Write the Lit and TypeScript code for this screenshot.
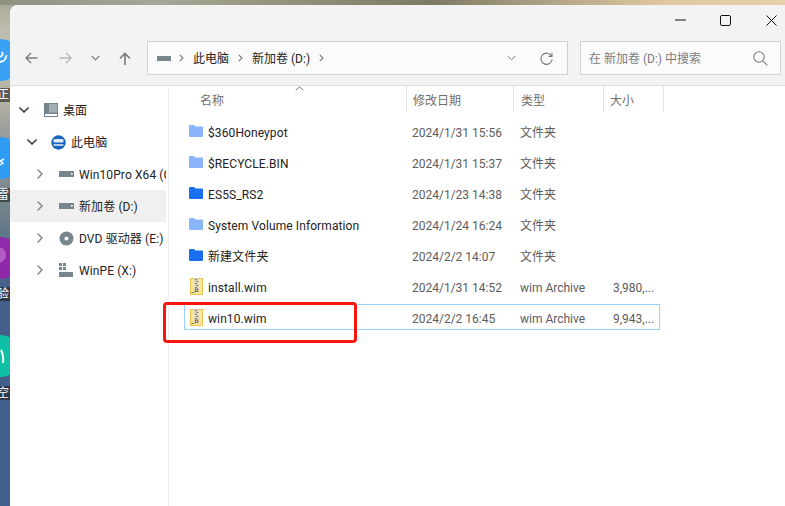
import { LitElement, html, css, svg } from "lit";
import { customElement } from "lit/decorators.js";

const folder = (c: string) => svg`<svg class="ficon" width="15" height="12" viewBox="0 0 15 12"><path d="M0 1Q0 0 1 0H5L6.6 1.6H13Q14 1.6 14 2.6V11Q14 12 13 12H1Q0 12 0 11Z" fill="${c}"/></svg>`;
const archive = svg`<svg class="ficon" width="15" height="17" viewBox="0 0 15 17"><rect x="1.5" y=".5" width="12" height="16" fill="#fbe59a" stroke="#ecc552" stroke-width="1"/><rect x="5.5" y="0" width="4" height="11" fill="#cfcfca"/><path d="M6 1.5h1.6M7.6 3.5h1.6M6 5.5h1.6M7.6 7.5h1.6M6 9.5h1.6" stroke="#77786f" stroke-width="1"/><rect x="5.8" y="10.5" width="3.6" height="3.6" rx=".6" fill="#77776a"/><rect x="7" y="11.6" width="1.4" height="1.2" fill="#deded2"/><path d="M2.4 14.5h3.2" stroke="#8f8a5c"/></svg>`;
const drive = svg`<svg width="15" height="6" viewBox="0 0 15 6"><rect width="15" height="6" rx=".6" fill="#77868c"/><rect x="12" y="2" width="1.6" height="1.6" fill="#fff"/></svg>`;
const chevR = svg`<svg width="8" height="12" viewBox="0 0 8 12"><path d="M1.6 1.4L6 6L1.6 10.6" fill="none" stroke="#8a8a8a" stroke-width="1.5"/></svg>`;
const chevD = svg`<svg width="12" height="8" viewBox="0 0 12 8"><path d="M1.4 1.5L6 6L10.6 1.5" fill="none" stroke="#333" stroke-width="1.5"/></svg>`;
const crumbChev = svg`<svg width="5" height="8" viewBox="0 0 5 8"><path d="M.8 .8L4 4L.8 7.2" fill="none" stroke="#777" stroke-width="1.1"/></svg>`;

const rows = [
  ["l", "$360Honeypot", "2024/1/31 15:56", "文件夹", ""],
  ["l", "$RECYCLE.BIN", "2024/1/31 15:37", "文件夹", ""],
  ["d", "ES5S_RS2", "2024/1/23 14:38", "文件夹", ""],
  ["l", "System Volume Information", "2024/1/24 16:24", "文件夹", ""],
  ["d", "新建文件夹", "2024/2/2 14:07", "文件夹", ""],
  ["a", "install.wim", "2024/1/31 14:52", "wim Archive", "3,980,..."],
  ["a", "win10.wim", "2024/2/2 16:45", "wim Archive", "9,943,..."],
];

@customElement("app-root")
export class AppRoot extends LitElement {
  static styles = css`
    :host {
      display: block; width: 785px; height: 506px; position: relative; overflow: hidden;
      font-family: Roboto, "Noto Sans CJK SC", sans-serif; font-size: 12px; line-height: 16px; color: #222;
      background: linear-gradient(180deg, #a9a897 0, #bdbcae 30px, #b5b3a5 100px, #9d9f9e 130px, #6d8089 215px, #5c7389 240px, #44608a 290px, #41608c 506px);
    }
    .top { position: absolute; left: 0; right: 0; top: 0; height: 5px;
      background: linear-gradient(90deg, #8e9180 0, #a8a796 20%, #7d7a62 55%, #a99e82 68%, #e0c9a2 85%, #e6cfa9 100%); }
    .blob { position: absolute; left: -21px; width: 42px; height: 42px; border-radius: 50%; }
    .b1 { top: 39px; background: #3ba1f4; }
    .b2 { top: 137px; background: #2f9bf3; }
    .b3 { top: 237px; background: #8e29a8; }
    .b4 { top: 335px; background: #10bfa4; }
    .dl { position: absolute; left: 0; width: 10px; height: 14px; overflow: hidden; color: #fff; font-size: 12px; line-height: 14px;
      background: rgba(30,30,30,.6); white-space: nowrap; text-indent: -3px; }
    .l1 { top: 88px; } .l2 { top: 188px; } .l3 { top: 287px; } .l4 { top: 386px; }
    .mark { position: absolute; left: 0; top: 0; }
    .win { position: absolute; left: 10px; top: 5px; right: 0; bottom: 0; background: #fff; border-top-left-radius: 8px;
      display: flex; flex-direction: column; overflow: hidden; }
    .bar { background: #f3f3f3; border-bottom: 1px solid #dedede; height: 80px; display: flex; flex-direction: column; flex: none; }
    .caption { height: 36px; display: flex; justify-content: flex-end; align-items: flex-start; padding-top: 8px; box-sizing: border-box; flex: none; }
    .cbtn { height: 14px; display: flex; justify-content: center; align-items: center; }
    .cmin { width: 44px; }
    .cmax { width: 46px; margin-right: 10px; }
    .cclose { width: 27px; }
    .nav { display: flex; height: 34px; align-items: center; flex: none; }
    .navi { display: flex; align-items: center; justify-content: center; flex: none; }
    .n1 { width: 42px; } .n2 { width: 26px; } .n3 { width: 34px; } .n4 { width: 26px; }
    .addr { width: 421px; margin-left: 9px; height: 34px; box-sizing: border-box; background: #fbfbfb; border: 1px solid #d2d2d2; display: flex; align-items: center; flex: none; color: #222; }
    .search { width: 201px; height: 34px; margin-left: 12px; box-sizing: border-box; background: #fbfbfb; border: 1px solid #d2d2d2; display: flex; align-items: center; justify-content: space-between; padding: 0 12px 0 8px; color: #7c7c7c; flex: none; }
    .t { padding-top: 2px; }
    .crumb { display: flex; align-items: center; }
    .c1 { margin-left: 9px; }
    .c2 { margin: 0 9px 0 8px; }
    .c3 { margin: 0 9px; }
    .c4 { margin-left: 9px; }
    .c5 { flex: 1; }
    .c6 { margin: 0 14px 0 24px; }
    .main { display: flex; flex: 1; min-height: 0; }
    .side { width: 158px; border-right: 1px solid #efefef; padding-top: 8px; flex: none; }
    .item { height: 32px; width: 156px; display: flex; align-items: center; white-space: nowrap; overflow: hidden; box-sizing: border-box; letter-spacing: .1px; }
    .item.sel { background: #f0f0f0; }
    .lv0 { padding-left: 7px; } .lv1 { padding-left: 15px; } .lv2 { padding-left: 23px; }
    .chev { width: 14px; display: flex; justify-content: center; flex: none; margin-right: 12px; }
    .ic { width: 15px; display: flex; justify-content: center; align-items: center; margin-right: 5px; flex: none; }
    .list { flex: 1; position: relative; padding-left: 15px; }
    .hd { height: 26px; display: flex; color: #6f6f6f; position: relative; }
    .hc { display: flex; align-items: center; border-right: 1px solid #e3e3e3; box-sizing: border-box; flex: none; padding-top: 4px; }
    .h1 { width: 223px; padding-left: 16px; }
    .h2 { width: 107px; padding-left: 6px; }
    .h3 { width: 90px; padding-left: 7px; }
    .h4 { width: 60px; padding-left: 6px; }
    .sort { position: absolute; left: 111px; top: 0; }
    .rows { display: flex; flex-direction: column; gap: 5px; padding-top: 6px; }
    .row { height: 26px; width: 476px; display: flex; align-items: center; box-sizing: border-box; border: 1px solid transparent; white-space: nowrap; }
    .row.sel { border-color: #99d1ff; }
    .name { width: 227px; display: flex; align-items: center; padding-left: 4px; box-sizing: border-box; color: #222; flex: none; letter-spacing: .1px; }
    .nm, .date, .type, .size { padding-top: 4px; }
    .ficon { margin-right: 4px; flex: none; }
    .date { width: 108px; color: #5c5c5c; flex: none; }
    .type { width: 93px; color: #5c5c5c; flex: none; }
    .size { color: #5c5c5c; }
    .red { position: absolute; left: -6px; top: 216px; width: 194px; height: 41px; box-sizing: border-box; border: 3px solid #f5170f; border-radius: 4px; pointer-events: none; }
  `;

  private side(lv: number, chev: unknown, icon: unknown, text: string, sel = false) {
    return html`<div class="item lv${lv} ${sel ? "sel" : ""}"><span class="chev">${chev}</span><span class="ic">${icon}</span><span class="t">${text}</span></div>`;
  }

  render() {
    return html`
      <div class="top"></div>
      <div class="blob b1"></div><div class="blob b2"></div><div class="blob b3"></div><div class="blob b4"></div>
      <svg class="mark" width="10" height="506" viewBox="0 0 10 506">
        <path d="M2 52Q4 55 0 57M6.5 55Q6 61 0 62" fill="none" stroke="#fff" stroke-width="1.8"/>
        <path d="M4 159L0 161L3 163L0 165" fill="none" stroke="#fff" stroke-width="1.4"/>
        <circle cx="-2" cy="255" r="8" fill="#b25bc4"/>
        <path d="M1 350Q4 356 3 363" fill="none" stroke="#fff" stroke-width="2"/>
      </svg>
      <div class="dl l1">正</div><div class="dl l2">雷</div><div class="dl l3">验</div><div class="dl l4">空</div>
      <div class="win">
        <div class="bar">
          <div class="caption">
            <span class="cbtn cmin"><svg width="11" height="2" viewBox="0 0 11 2"><path d="M0 1H11" stroke="#111" stroke-width="1"/></svg></span>
            <span class="cbtn cmax"><svg width="11" height="11" viewBox="0 0 11 11"><rect x=".5" y=".5" width="10" height="10" rx="1.4" fill="none" stroke="#111"/></svg></span>
            <span class="cbtn cclose"><svg width="11" height="11" viewBox="0 0 11 11"><path d="M.5 .5L10.5 10.5M10.5 .5L.5 10.5" stroke="#111"/></svg></span>
          </div>
          <div class="nav">
            <span class="navi n1"><svg width="13" height="12" viewBox="0 0 13 12"><path d="M12.5 6H1M6 1L1 6L6 11" fill="none" stroke="#7d7d7d" stroke-width="1.4"/></svg></span>
            <span class="navi n2"><svg width="13" height="12" viewBox="0 0 13 12"><path d="M.5 6H12M7 1L12 6L7 11" fill="none" stroke="#b9b9b9" stroke-width="1.4"/></svg></span>
            <span class="navi n3"><svg width="9" height="6" viewBox="0 0 9 6"><path d="M.7 1L4.5 4.8L8.3 1" fill="none" stroke="#808080" stroke-width="1.2"/></svg></span>
            <span class="navi n4"><svg width="12" height="13" viewBox="0 0 12 13"><path d="M6 13V1.5M1 6.5L6 1.5L11 6.5" fill="none" stroke="#7a7a7a" stroke-width="1.6"/></svg></span>
            <div class="addr">
              <span class="crumb c1"><svg width="14" height="5" viewBox="0 0 14 5"><rect width="14" height="5" rx=".5" fill="#77868c"/></svg></span>
              <span class="crumb c2">${crumbChev}</span>
              <span class="t">此电脑</span>
              <span class="crumb c3">${crumbChev}</span>
              <span class="t">新加卷 (D:)</span>
              <span class="crumb c4">${crumbChev}</span>
              <span class="c5"></span>
              <span class="crumb"><svg width="9" height="6" viewBox="0 0 9 6"><path d="M.7 1L4.5 4.8L8.3 1" fill="none" stroke="#808080" stroke-width="1"/></svg></span>
              <span class="crumb c6"><svg width="13" height="13" viewBox="0 0 13 13"><path d="M11.6 4.2A5.6 5.6 0 1 0 12.2 7.2M12 .8V4.4H8.4" fill="none" stroke="#7c7c7c" stroke-width="1.1"/></svg></span>
            </div>
            <div class="search"><span class="t">在 新加卷 (D:) 中搜索</span>
              <svg width="15" height="15" viewBox="0 0 15 15"><circle cx="6" cy="6" r="5.2" fill="none" stroke="#7c7c7c" stroke-width="1.1"/><path d="M9.8 9.8L14.4 14.4" stroke="#7c7c7c" stroke-width="1.1"/></svg>
            </div>
          </div>
        </div>
        <div class="main">
          <div class="side">
            ${this.side(0, chevD, svg`<svg width="14" height="14" viewBox="0 0 14 14"><rect width="14" height="14" fill="#77868c"/><rect x="5" y="1" width="8" height="8.5" fill="#a3aeb3"/><rect x="1" y="11" width="12" height="2" fill="#fff"/></svg>`, "桌面")}
            ${this.side(1, chevD, svg`<svg width="15" height="15" viewBox="0 0 15 15"><circle cx="7.5" cy="7.5" r="7.2" fill="#1564c0"/><rect x="2.4" y="4" width="10.2" height="3.6" rx="1.6" fill="#dfeaf5"/><rect x="2.4" y="9" width="10.2" height="2" rx="1" fill="#b9cfe6"/></svg>`, "此电脑")}
            ${this.side(2, chevR, drive, "Win10Pro X64 (C:)")}
            ${this.side(2, chevR, drive, "新加卷 (D:)", true)}
            ${this.side(2, chevR, svg`<svg width="15" height="15" viewBox="0 0 15 15"><circle cx="7.5" cy="7.5" r="7" fill="#77868c"/><circle cx="7.5" cy="7.5" r="2" fill="#fff"/></svg>`, "DVD 驱动器 (E:)")}
            ${this.side(2, chevR, svg`<svg width="15" height="15" viewBox="0 0 15 15"><g fill="#77868c"><rect x="0" y="0" width="3" height="3"/><rect x="4" y="0" width="3" height="3"/><rect x="0" y="4" width="3" height="3"/><rect x="4" y="4" width="3" height="3"/><rect x="0" y="9" width="14" height="5" rx=".5"/></g></svg>`, "WinPE (X:)")}
          </div>
          <div class="list">
            <div class="hd">
              <div class="hc h1">名称</div>
              <div class="hc h2">修改日期</div>
              <div class="hc h3">类型</div>
              <div class="hc h4">大小</div>
              <svg class="sort" width="9" height="5" viewBox="0 0 9 5"><path d="M.7 4.3L4.5 .8L8.3 4.3" fill="none" stroke="#777" stroke-width="1"/></svg>
            </div>
            <div class="rows">
              ${rows.map((r, i) => html`<div class="row ${i === 6 ? "sel" : ""}">
                <span class="name">${r[0] === "l" ? folder("#8ab4fb") : r[0] === "d" ? folder("#196ff0") : archive}<span class="nm">${r[1]}</span></span>
                <span class="date">${r[2]}</span><span class="type">${r[3]}</span><span class="size">${r[4]}</span>
              </div>`)}
            </div>
            <div class="red"></div>
          </div>
        </div>
      </div>
    `;
  }
}
